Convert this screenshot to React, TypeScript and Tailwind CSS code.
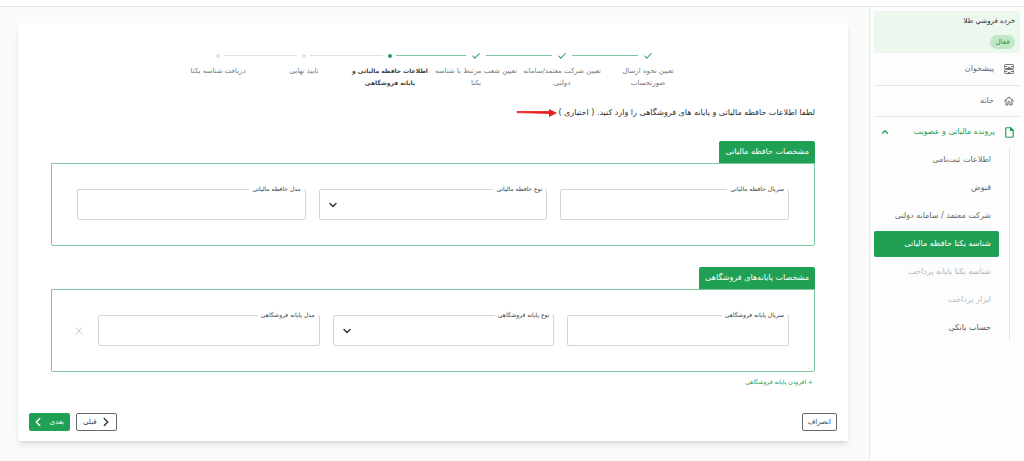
import { Check, ChevronDown, ChevronLeft, ChevronRight, ChevronUp } from "lucide-react";

const steps = [
  { label: "تعیین نحوه ارسال صورتحساب", state: "done", line: "right-[53px] w-[66px] bg-[#7fc79f]" },
  { label: "تعیین شرکت معتمد/سامانه دولتی", state: "done", line: "right-[53px] w-[66px] bg-[#7fc79f]" },
  { label: "تعیین شعب مرتبط با شناسه یکتا", state: "done", line: "right-[53px] w-[70px] bg-[#7fc79f]" },
  { label: "اطلاعات حافظه مالیاتی و پایانه فروشگاهی", state: "current", line: "right-[50px] w-[73px] bg-[#dfe1e2]" },
  { label: "تایید نهایی", state: "todo", line: "right-[50px] w-[73px] bg-[#dfe1e2]" },
  { label: "دریافت شناسه یکتا", state: "todo", line: "" },
];

const subItems = [
  { label: "اطلاعات ثبت‌نامی", style: "text-[#66696c]" },
  { label: "قبوض", style: "text-[#66696c]" },
  { label: "شرکت معتمد / سامانه دولتی", style: "text-[#66696c]" },
  { label: "شناسه یکتا حافظه مالیاتی", style: "bg-[#20a055] text-white" },
  { label: "شناسه یکتا پایانه پرداخت", style: "text-[#b4b6b8]" },
  { label: "ابزار پرداخت", style: "text-[#b4b6b8]" },
  { label: "حساب بانکی", style: "text-[#55585b]" },
];

const DashboardIcon = () => (
  <svg viewBox="0 0 20 20" className="size-[10px]" fill="none" stroke="currentColor" strokeWidth="1.8">
    <rect x="1" y="1" width="18" height="8" rx="1.5" />
    <rect x="1" y="11" width="18" height="8" rx="1.5" />
    <path d="M1 5h5c1 0 1 2 2 2h4c1 0 1-2 2-2h5M1 15h5c1 0 1 2 2 2h4c1 0 1-2 2-2h5" />
  </svg>
);

const HomeIcon = () => (
  <svg viewBox="0 0 20 20" className="size-[10px]" fill="none" stroke="currentColor" strokeWidth="2">
    <path d="M1 10 10 2l9 8M4 8v10h4v-5a2 2 0 0 1 4 0v5h4V8" strokeLinejoin="round" strokeLinecap="round" />
  </svg>
);

const FileIcon = () => (
  <svg viewBox="0 0 18 22" className="h-[11px] w-[9px]" fill="none" stroke="currentColor" strokeWidth="2.4">
    <path d="M3 1.5h8l5.5 5.5v12a1.5 1.5 0 0 1-1.5 1.5H3A1.5 1.5 0 0 1 1.5 19V3A1.5 1.5 0 0 1 3 1.5Z" />
    <path d="M11 1.5V7h5.5Z" fill="currentColor" />
  </svg>
);

const Stepper = () => (
  <ol className="mx-auto grid w-[516px] max-w-full grid-cols-6">
    {steps.map((step) => (
      <li key={step.label} className="relative flex flex-col items-center">
        <div className="flex h-3 items-center">
          {step.state === "done" && <Check className="size-[10px] text-[#20a055]" strokeWidth={2.5} />}
          {step.state === "current" && <span className="size-1 rounded-full bg-[#20a055]" />}
          {step.state === "todo" && <span className="size-1 rounded-full bg-[#dfe1e2]" />}
        </div>
        {step.line && <span className={`absolute top-[5px] h-px ${step.line}`} />}
        <span
          className={`mt-[3px] text-center leading-3 ${
            step.state === "current" ? "text-[6px] font-bold text-[#3a3d40]" : "text-[7px] text-[#75787b]"
          }`}
        >
          {step.label}
        </span>
      </li>
    ))}
  </ol>
);

type FieldProps = { id: string; label: string; select?: boolean };

const Field = ({ id, label, select }: FieldProps) => (
  <div className="relative min-w-0 flex-1">
    <label
      htmlFor={id}
      className="absolute -top-[6px] right-[2px] bg-white px-[3px] text-[6px] leading-3 whitespace-nowrap text-[#3a3d40]"
    >
      {label}
    </label>
    {select ? (
      <>
        <select
          id={id}
          defaultValue=""
          className="block h-[31px] w-full appearance-none rounded-xs border border-[#d5d6d7] bg-white px-3 text-[7px]"
        >
          <option value=""></option>
        </select>
        <ChevronDown
          className="pointer-events-none absolute top-[10px] left-2 size-3 text-[#36393c]"
          strokeWidth={3}
        />
      </>
    ) : (
      <input
        id={id}
        type="text"
        className="block h-[31px] w-full rounded-xs border border-[#d5d6d7] bg-white px-3 text-[7px]"
      />
    )}
  </div>
);

type PanelProps = { title: string; children: React.ReactNode };

const Panel = ({ title, children }: PanelProps) => (
  <section>
    <h2 className="flex h-[22px] w-fit items-center rounded-t-xs bg-[#20a055] px-[6px] text-[8px] text-white">
      {title}
    </h2>
    <div className="flex items-center gap-[13px] rounded-b-xs border border-[#7fc79f] px-[25px] py-[25px]">
      {children}
    </div>
  </section>
);

const Sidebar = () => (
  <aside className="w-[155px] shrink-0 border-l border-[#e6e8e8] bg-[#fdfdfd] px-1 pt-1">
    <div className="h-[42px] rounded-xs bg-[#ecf7ee] px-[5px] pt-1">
      <p className="text-[7px] leading-3 text-[#2b2e31]">خرده فروشي طلا</p>
      <span className="mt-2 flex h-[14px] w-[25px] items-center justify-center rounded-full bg-[#c0e8c6] text-[7px] text-[#2e9440]">
        فعال
      </span>
    </div>
    <nav className="text-[8px]">
      <a href="#" className="flex h-[33px] items-center gap-[10px] border-b border-[#e6e8e8] px-[6px] text-[#66696c]">
        <DashboardIcon />
        پیشخوان
      </a>
      <a href="#" className="flex h-[31px] items-center gap-[10px] border-b border-[#e6e8e8] px-[6px] text-[#66696c]">
        <HomeIcon />
        خانه
      </a>
      <button type="button" className="flex h-[30px] w-full items-center gap-[10px] px-[6px] text-[#20a055]">
        <FileIcon />
        <span>پرونده مالیاتی و عضویت</span>
        <ChevronUp className="mr-auto size-[10px]" strokeWidth={3} />
      </button>
      <ul className="mr-[10px] flex flex-col gap-[2px] border-r border-[#e6e8e8] pr-[10px]">
        {subItems.map((item) => (
          <li key={item.label}>
            <a href="#" className={`flex h-[26px] items-center rounded-xs px-2 ${item.style}`}>
              {item.label}
            </a>
          </li>
        ))}
      </ul>
    </nav>
  </aside>
);

const App = () => {
  return (
    <div
      dir="rtl"
      className="flex min-h-screen flex-col bg-[#f9fbf9] font-['DejaVu_Sans',sans-serif]"
    >
      <header className="h-[7px] border-b border-[#e6e8e8] bg-white" />
      <div className="flex flex-1">
        <Sidebar />
        <main className="min-w-0 flex-1 pt-4 pr-[21px] pl-[18px]">
          <div className="bg-white pt-[27px] pb-[10px] shadow-md">
            <Stepper />
            <form className="px-[33px]">
              <p className="mt-4 flex h-4 items-center text-[8px] text-[#2b2e31]">
                لطفا اطلاعات حافظه مالیاتی و پایانه های فروشگاهی را وارد کنید. ( اختیاری )
                <svg viewBox="0 0 42 8" className="h-2 w-[42px]" fill="#e8211d">
                  <path d="M1 2.5h33v2L1 3.6Z" stroke="#e8211d" strokeWidth="0.8" />
                  <path d="M33 0l8 4-8 4Z" />
                </svg>
              </p>
              <div className="mt-5">
                <Panel title="مشخصات حافظه مالیاتی">
                  <Field id="memory-serial" label="سریال حافظه مالیاتی" />
                  <Field id="memory-type" label="نوع حافظه مالیاتی" select />
                  <Field id="memory-model" label="مدل حافظه مالیاتی" />
                </Panel>
              </div>
              <div className="mt-[21px]">
                <Panel title="مشخصات پایانه‌های فروشگاهی">
                  <Field id="terminal-serial" label="سریال پایانه فروشگاهی" />
                  <Field id="terminal-type" label="نوع پایانه فروشگاهی" select />
                  <Field id="terminal-model" label="مدل پایانه فروشگاهی" />
                  <button type="button" aria-label="حذف" className="-ml-1 w-3 text-[#c9cbcc]">
                    <svg viewBox="0 0 12 12" className="size-3" fill="none" stroke="currentColor">
                      <path d="m2.5 2.5 7 7M9.5 2.5l-7 7" />
                    </svg>
                  </button>
                </Panel>
              </div>
              <button type="button" className="mt-1 mr-[2px] block text-[6px] leading-3 text-[#20a055]">
                + افزودن پایانه فروشگاهی
              </button>
            </form>
            <div className="mt-[25px] flex gap-[6px] px-[11px] text-[7px]">
              <button type="button" className="ml-auto h-[18px] w-[35px] rounded-xs border border-[#66696c] text-[#36393c]">
                انصراف
              </button>
              <button
                type="button"
                className="flex h-[18px] w-[41px] items-center justify-between rounded-xs border border-[#66696c] pr-[3px] pl-[6px] text-[#36393c]"
              >
                <ChevronRight className="size-[14px]" strokeWidth={2.5} />
                قبلی
              </button>
              <button
                type="button"
                className="flex h-[18px] w-[41px] items-center justify-between rounded-xs bg-[#20a055] pr-[6px] pl-[2px] text-white"
              >
                بعدی
                <ChevronLeft className="size-[14px]" strokeWidth={2.5} />
              </button>
            </div>
          </div>
        </main>
      </div>
    </div>
  );
};

export default App;
